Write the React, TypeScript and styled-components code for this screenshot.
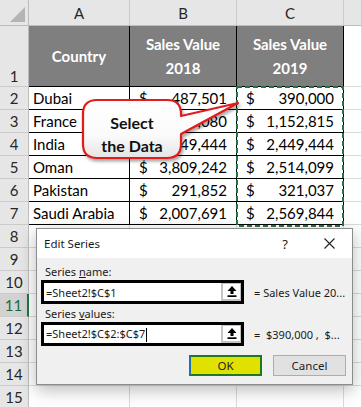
import React from 'react';
import styled, { createGlobalStyle, css } from 'styled-components';

const Global = createGlobalStyle`
  html, body { margin: 0; padding: 0; background: #fff; }
  #root { width: 362px; height: 407px; }
`;

const Sheet = styled.div`
  position: relative;
  width: 362px;
  height: 407px;
  overflow: hidden;
  display: grid;
  grid-template-columns: 29px 101px 107px 107px 18px;
  grid-template-rows: 26px 61px repeat(14, 23px);
  font-family: Lato, "Liberation Sans", sans-serif;
  font-size: 15px;
  color: #000;
  background: #fff;
`;

const Corner = styled.div`
  position: relative;
  box-sizing: border-box;
  background: #e6e6e6;
  border-right: 1px solid #bdbdbd;
  border-bottom: 1px solid #bdbdbd;
  &::after {
    content: '';
    position: absolute;
    right: 3px;
    bottom: 3px;
    width: 15px;
    height: 15px;
    background: #b4b4b4;
    clip-path: polygon(100% 0, 100% 100%, 0 100%);
  }
`;

const ColHead = styled.div`
  box-sizing: border-box;
  background: #e6e6e6;
  border-right: 1px solid #cacaca;
  border-bottom: 1px solid #bdbdbd;
  display: flex;
  align-items: center;
  justify-content: center;
  color: #262626;
  font-size: 15px;
`;

const RowHead = styled.div<{ $bottom?: boolean; $active?: boolean }>`
  box-sizing: border-box;
  background: #e6e6e6;
  border-right: 1px solid #bdbdbd;
  border-bottom: 1px solid #cacaca;
  display: flex;
  justify-content: center;
  align-items: ${(p) => (p.$bottom ? 'flex-end' : 'center')};
  padding-bottom: ${(p) => (p.$bottom ? '1px' : '0')};
  color: #262626;
  font-size: 15px;
  ${(p) =>
    p.$active &&
    css`
      background: #d2d2d2;
      color: #1e6b3c;
      border-right: 2px solid #217346;
    `}
`;

const TitleCell = styled.div`
  box-sizing: border-box;
  background: #7f7f7f;
  border-right: 1px solid #000;
  border-bottom: 1px solid #000;
  display: flex;
  align-items: center;
  justify-content: center;
  text-align: center;
  color: #fff;
  font-weight: 700;
  font-size: 15px;
  line-height: 24px;
`;

const TextCell = styled.div`
  box-sizing: border-box;
  border-right: 1px solid #000;
  border-bottom: 1px solid #000;
  display: flex;
  align-items: center;
  padding-left: 4px;
  white-space: nowrap;
`;

const MoneyCell = styled.div`
  box-sizing: border-box;
  border-right: 1px solid #000;
  border-bottom: 1px solid #000;
  display: flex;
  align-items: center;
  justify-content: space-between;
  padding: 0 9px 0 9px;
  white-space: nowrap;
`;

const Blank = styled.div`
  box-sizing: border-box;
  border-right: 1px solid #dadada;
  border-bottom: 1px solid #dadada;
`;

const Marquee = styled.svg`
  position: absolute;
  left: 236px;
  top: 86px;
  width: 108px;
  height: 141px;
  overflow: visible;
`;

const Callout = styled.div`
  position: absolute;
  left: 78px;
  top: 94px;
  width: 166px;
  height: 74px;
`;

const CalloutShape = styled.svg`
  position: absolute;
  left: 0;
  top: 0;
  width: 166px;
  height: 74px;
  overflow: visible;
`;

const CalloutText = styled.div`
  position: relative;
  width: 98px;
  margin-left: 5px;
  padding-top: 17px;
  text-align: center;
  font-weight: 700;
  font-size: 16px;
  line-height: 23px;
  color: #111;
`;

const Dialog = styled.div`
  position: absolute;
  left: 36px;
  top: 228px;
  width: 317px;
  height: 157px;
  box-sizing: border-box;
  border: 1px solid #8c8c8c;
  background: #f0f0f0;
  box-shadow: 0 5px 16px rgba(0, 0, 0, 0.28);
  font-family: "Noto Sans", "Open Sans", sans-serif;
  font-size: 11px;
  color: #1a1a1a;
  display: flex;
  flex-direction: column;
`;

const TitleBar = styled.div`
  height: 30px;
  background: #fff;
  display: flex;
  align-items: center;
  padding-left: 7px;
`;

const TitleText = styled.div`
  flex: 1;
  font-size: 11.5px;
`;

const Help = styled.div`
  font-size: 13px;
  margin-right: 36px;
  color: #222;
`;

const CloseIcon = styled.svg`
  width: 11px;
  height: 11px;
  margin-right: 17px;
`;

const Body = styled.div`
  flex: 1;
  padding: 6px 6px 8px 4px;
  display: flex;
  flex-direction: column;
`;

const Label = styled.div<{ $gap?: number }>`
  height: 16px;
  line-height: 16px;
  padding-left: 4px;
  margin-top: ${(p) => p.$gap ?? 0}px;
`;

const Underlined = styled.span`
  text-decoration: underline;
`;

const FieldRow = styled.div`
  display: flex;
  align-items: center;
  gap: 10px;
`;

const RefBox = styled.div`
  flex-shrink: 0;
  box-sizing: border-box;
  width: 203px;
  height: 24px;
  border: 3px solid #000;
  background: #fff;
  display: flex;
  align-items: center;
  padding-left: 2px;
`;

const RefText = styled.span`
  white-space: nowrap;
`;

const Caret = styled.span`
  display: inline-block;
  width: 1px;
  height: 14px;
  background: #000;
  margin-left: 1px;
  vertical-align: middle;
`;

const Collapse = styled.div`
  margin-left: auto;
  box-sizing: border-box;
  width: 20px;
  height: 18px;
  background: #fff;
  border: 2px solid #c4c4c4;
  border-top-width: 1px;
  border-right-width: 1px;
  display: flex;
  align-items: center;
  justify-content: center;
`;

const Preview = styled.div`
  white-space: nowrap;
  overflow: hidden;
`;

const Buttons = styled.div`
  margin-top: 9px;
  display: flex;
  justify-content: flex-end;
  gap: 11px;
`;

const Btn = styled.div<{ $primary?: boolean }>`
  box-sizing: border-box;
  width: 73px;
  height: 21px;
  display: flex;
  align-items: center;
  justify-content: center;
  font-size: 11.5px;
  ${(p) =>
    p.$primary
      ? css`
          background: #e1e100;
          border: 2px solid #1d7a1d;
          border-left-color: #1f6fb3;
          color: #222;
        `
      : css`
          background: #e1e1e1;
          border: 1px solid #adadad;
          color: #222;
        `}
`;

const ArrowIcon = () => (
  <svg width="10" height="11" viewBox="0 0 10 11">
    <path d="M5 0 L0.5 5 H3.5 V8 H6.5 V5 H9.5 Z" fill="#000" />
    <rect x="0.5" y="9.3" width="9" height="1.7" fill="#000" />
  </svg>
);

const rows = [
  { c: 'Dubai', b: '487,501', v: '390,000' },
  { c: 'France', b: '1,152,080', v: '1,152,815' },
  { c: 'India', b: '2,449,444', v: '2,449,444' },
  { c: 'Oman', b: '3,809,242', v: '2,514,099' },
  { c: 'Pakistan', b: '291,852', v: '321,037' },
  { c: 'Saudi Arabia', b: '2,007,691', v: '2,569,844' },
];

export default function App() {
  return (
    <>
      <Global />
      <Sheet>
        <Corner />
        <ColHead>A</ColHead>
        <ColHead>B</ColHead>
        <ColHead>C</ColHead>
        <ColHead />

        <RowHead $bottom>1</RowHead>
        <TitleCell>Country</TitleCell>
        <TitleCell>
          Sales Value
          <br />
          2018
        </TitleCell>
        <TitleCell>
          Sales Value
          <br />
          2019
        </TitleCell>
        <Blank />

        {rows.map((r, i) => (
          <React.Fragment key={r.c}>
            <RowHead>{i + 2}</RowHead>
            <TextCell>{r.c}</TextCell>
            <MoneyCell>
              <span>$</span>
              <span>{r.b}</span>
            </MoneyCell>
            <MoneyCell>
              <span>$</span>
              <span>{r.v}</span>
            </MoneyCell>
            <Blank />
          </React.Fragment>
        ))}

        {[8, 9, 10, 11, 12, 13, 14, 15].map((n) => (
          <React.Fragment key={n}>
            <RowHead $active={n === 11}>{n}</RowHead>
            <Blank />
            <Blank />
            <Blank />
            <Blank />
          </React.Fragment>
        ))}

        <Marquee viewBox="0 0 108 141">
          <rect
            x="1"
            y="1"
            width="106"
            height="139"
            fill="none"
            stroke="#217346"
            strokeWidth="2"
            strokeDasharray="5 3"
          />
        </Marquee>

        <Callout>
          <CalloutShape viewBox="0 0 166 74">
            <defs>
              <linearGradient id="bub" x1="0" y1="0" x2="0" y2="1">
                <stop offset="0" stopColor="#ffffff" />
                <stop offset="0.6" stopColor="#fbfbfb" />
                <stop offset="1" stopColor="#e4e4e4" />
              </linearGradient>
              <filter id="sh" x="-10%" y="-10%" width="130%" height="140%">
                <feDropShadow dx="1.5" dy="2.5" stdDeviation="1.5" floodColor="#000" floodOpacity="0.35" />
              </filter>
            </defs>
            <path
              d="M19 6 H89 Q103 6 103 20 V22 L160 9 L103 40 V50 Q103 64 89 64 H19 Q5 64 5 50 V20 Q5 6 19 6 Z"
              fill="url(#bub)"
              stroke="#e01b1b"
              strokeWidth="2.2"
              strokeLinejoin="round"
              filter="url(#sh)"
            />
          </CalloutShape>
          <CalloutText>
            Select
            <br />
            the Data
          </CalloutText>
        </Callout>

        <Dialog>
          <TitleBar>
            <TitleText>Edit Series</TitleText>
            <Help>?</Help>
            <CloseIcon viewBox="0 0 11 11">
              <path d="M0.5 0.5 L10.5 10.5 M10.5 0.5 L0.5 10.5" stroke="#222" strokeWidth="1.1" />
            </CloseIcon>
          </TitleBar>
          <Body>
            <Label>
              Series <Underlined>n</Underlined>ame:
            </Label>
            <FieldRow>
              <RefBox>
                <RefText>=Sheet2!$C$1</RefText>
                <Collapse>
                  <ArrowIcon />
                </Collapse>
              </RefBox>
              <Preview>= Sales Value 20...</Preview>
            </FieldRow>
            <Label $gap={2}>
              Series <Underlined>v</Underlined>alues:
            </Label>
            <FieldRow>
              <RefBox>
                <RefText>
                  =Sheet2!$C$2:$C$7
                  <Caret />
                </RefText>
                <Collapse>
                  <ArrowIcon />
                </Collapse>
              </RefBox>
              <Preview>=&nbsp;&nbsp;$390,000 ,&nbsp;&nbsp;$...</Preview>
            </FieldRow>
            <Buttons>
              <Btn $primary>OK</Btn>
              <Btn>Cancel</Btn>
            </Buttons>
          </Body>
        </Dialog>
      </Sheet>
    </>
  );
}
